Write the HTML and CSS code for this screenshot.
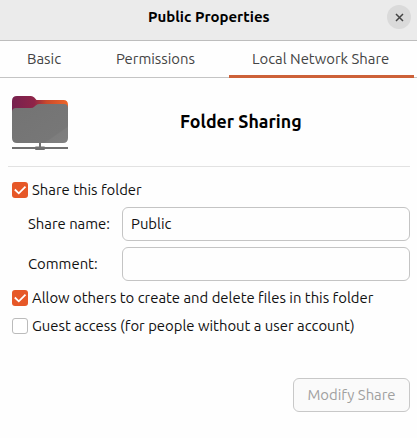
FILE: index.html
```html
<!DOCTYPE html>
<html lang="en">
<head>
<meta charset="utf-8">
<title>Public Properties</title>
<link rel="stylesheet" href="styles.css">
</head>
<body>
<header class="titlebar">
  <h1 class="title">Public Properties</h1>
  <button class="close" aria-label="Close"><svg width="9" height="9" viewBox="0 0 9 9"><path d="M1 1l7 7M8 1L1 8" stroke="#444" stroke-width="1.5" fill="none"/></svg></button>
</header>
<nav class="tabs">
  <a class="tab basic"><span>Basic</span></a>
  <a class="tab permissions"><span>Permissions</span></a>
  <a class="tab active"><span>Local Network Share</span></a>
</nav>
<main class="content">
  <section class="intro">
    <svg class="folder" width="56" height="56" viewBox="0 0 56 56">
      <defs>
        <linearGradient id="back" x1="0" x2="1"><stop offset="0" stop-color="#76214f"/><stop offset=".4" stop-color="#8f2448"/><stop offset=".62" stop-color="#c94a2c"/><stop offset="1" stop-color="#ee6528"/></linearGradient>
        <linearGradient id="front" x1="0" y1="0" x2="1" y2="1"><stop offset="0" stop-color="#737373"/><stop offset=".78" stop-color="#777"/><stop offset=".8" stop-color="#7d7d7d"/><stop offset="1" stop-color="#808080"/></linearGradient>
      </defs>
      <path d="M0 5q0-5 5-5h14q2 0 3.300 1.600L24.500 4h27q4.500 0 4.500 5v14H0z" fill="url(#back)"/>
      <path d="M0 16q0-4 4-4h15q2 0 3.500-1.500L24 9.200Q25.400 8 27.500 8H52q4 0 4 4v30q0 5-5 5H5q-5 0-5-5z" fill="url(#front)"/>
      <path d="M27 47h2v3.500h3q1 0 1 .5h23v2H33q0 1-1 1h-8q-1 0-1-1H0v-2h23q0-.5 1-.5h3z" fill="#707070"/>
    </svg>
    <h2 class="heading">Folder Sharing</h2>
  </section>
  <form class="form">
    <div class="check share"><span class="box checked"><svg width="16" height="16" viewBox="0 0 16 16"><path d="M2.800 7.500l4 3.800 6.700-6.600" fill="none" stroke="#fff" stroke-width="1.800"/></svg></span><span class="label">Share this folder</span></div>
    <div class="field"><label class="name" for="name">Share name:</label><input id="name" value="Public"></div>
    <div class="field"><label class="comment" for="comment">Comment:</label><input id="comment"></div>
    <div class="check allow"><span class="box checked"><svg width="16" height="16" viewBox="0 0 16 16"><path d="M2.800 7.500l4 3.800 6.700-6.600" fill="none" stroke="#fff" stroke-width="1.800"/></svg></span><span class="label">Allow others to create and delete files in this folder</span></div>
    <div class="check guest"><span class="box"></span><span class="label">Guest access (for people without a user account)</span></div>
    <button class="modify" type="button" disabled>Modify Share</button>
  </form>
</main>
</body>
</html>
```
FILE: styles.css
```css
* { box-sizing: border-box; }
body { margin: 0; width: 417px; height: 438px; overflow: hidden; background: #fefefe; color: #111; font: 14.87px/20px "Ubuntu", "Noto Sans", sans-serif; white-space: nowrap; }
h1, h2 { margin: 0; }
.titlebar { display: grid; grid-template-columns: 1fr 24px; align-items: center; height: 41px; padding: 0 6px 6px 148px; background: #ebebeb; border-bottom: 1px solid #bdbdbd; }
.title { font-size: 15px; line-height: 20px; color: #000; }
.close { display: grid; place-items: center; width: 24px; height: 24px; padding: 0; border: 0; border-radius: 50%; background: #dadada; }
.tabs { display: grid; grid-template-columns: 89px 140px 185px; height: 37px; border-bottom: 1px solid #c4c4c4; color: #444; }
.tab { display: flex; height: 37px; padding-top: 8px; }
.basic { padding-left: 27px; }
.permissions { padding-left: 27px; }
.active { padding-left: 23px; border-bottom: 3px solid #cd6138; }
.content { padding: 0 7px 0 8px; }
.intro { display: grid; grid-template-columns: 168px 1fr; height: 89px; padding: 18px 0 0 4px; border-bottom: 1px solid #e2e2e2; }
.folder { display: block; }
.heading { padding-top: 14px; font-size: 17.8px; line-height: 22px; color: #000; }
.form { display: flex; flex-direction: column; }
.check { display: flex; align-items: center; gap: 4px; height: 20px; padding-left: 4px; }
.box { width: 16px; height: 16px; border: 1px solid #bbb; border-radius: 3px; background: #fff; }
.checked { border: 0; background: #e65828; }
.box svg { display: block; }
.share { margin: 13px 0 7px; }
.field { display: grid; grid-template-columns: 94px 288px; align-items: center; margin-bottom: 6px; padding-left: 20px; }
.field input { height: 34px; padding: 0 8px 2px; border: 1px solid #c4c4c4; border-radius: 6px; background: #fefefe; color: #111; font: inherit; outline: none; }
.allow { margin-top: 1px; }
.guest { margin-top: 8px; }
.modify { align-self: flex-end; width: 117px; height: 34px; margin-top: 42px; padding: 0; border: 1px solid #c8c8c8; border-radius: 6px; background: #fafafa; color: #a0a0a0; font: inherit; }
```
